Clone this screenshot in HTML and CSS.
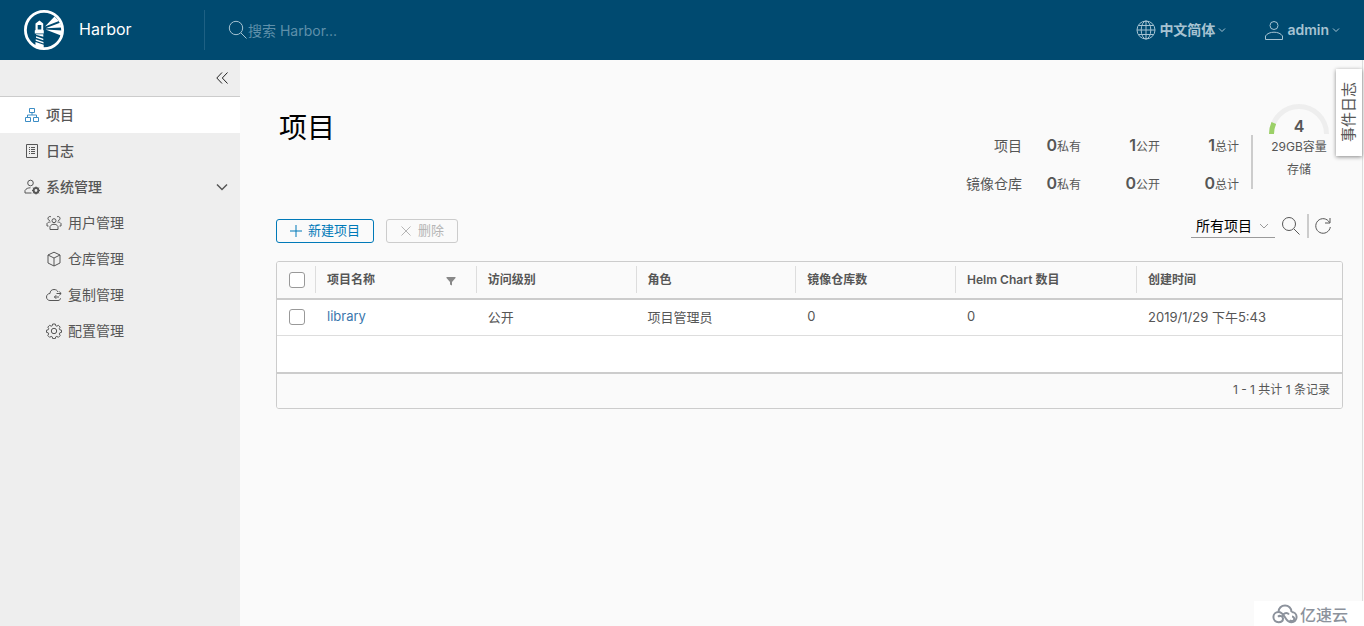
FILE: index.html
```html
<!DOCTYPE html>
<html lang="zh-CN">
<head>
<meta charset="utf-8">
<meta name="viewport" content="width=device-width, initial-scale=1">
<title>Harbor</title>
<link rel="stylesheet" href="styles.css">
</head>
<body>
<div class="app">
  <header class="topbar">
    <a class="brand" href="#">
      <svg class="brand-logo" viewBox="0 0 40 40" aria-hidden="true">
        <circle cx="20" cy="20" r="18.6" fill="none" stroke="#fff" stroke-width="2.8"/>
        <path fill="#fff" fill-rule="evenodd" d="M15.500 10.500 11.500 13.500V20l-.7.500v3h9v-3L19.200 20v-6.500zM13.700 15h3.600v4.500h-3.600z"/>
        <path fill="#fff" d="M12 24.300h7.300v2.500L12 24.800zM12 26.200l7.300 2.500v1.500L12 27.700zM11.700 29.200l7.800 2.700v1.500l-7.800-2.700zM11.500 32l8.200 2.800V38.500h-3.700l-4.700-1.500z"/>
        <path fill="#fff" d="M21 16.500 30.500 6.500l4.500 4.500zM21.500 18.200l14.500-5.500L37.500 17.500zM21.500 19.500l16.500 1-1 5z"/>
      </svg>
      <span class="brand-name">Harbor</span>
    </a>
    <form class="search" role="search">
      <svg class="search-icon" viewBox="0 0 20 20" aria-hidden="true"><circle cx="8" cy="8" r="6.700"/><path d="M13 13l5.500 5.500"/></svg>
      <input class="search-input" type="search" placeholder="搜索 Harbor..." aria-label="搜索 Harbor">
    </form>
    <div class="topbar-actions">
      <button class="top-button" type="button">
        <svg class="globe" viewBox="0 0 20 20" aria-hidden="true"><circle cx="10" cy="10" r="9"/><ellipse cx="10" cy="10" rx="4.800" ry="9"/><path d="M10 1v18M1 10h18M2.500 5.500h15M2.500 14.500h15"/></svg>
        <span>中文简体</span>
        <svg class="caret" viewBox="0 0 8 8" aria-hidden="true"><path d="M1 2.500l3 3 3-3"/></svg>
      </button>
      <button class="top-button" type="button">
        <svg class="person" viewBox="0 0 20 20" aria-hidden="true"><circle cx="10" cy="5.500" r="4"/><path d="M1.500 19.500v-3.500c1.500-2.500 5-3.800 8.500-3.800s7 1.300 8.500 3.800v3.500z"/></svg>
        <span>admin</span>
        <svg class="caret" viewBox="0 0 8 8" aria-hidden="true"><path d="M1 2.500l3 3 3-3"/></svg>
      </button>
    </div>
  </header>
  <div class="body">
    <nav class="sidebar">
      <div class="collapse-row">
        <button class="collapse" type="button" aria-label="收起">
          <svg viewBox="0 0 12 12" aria-hidden="true"><path d="M6 .500.800 6 6 11.500M11.500.500 6.300 6l5.200 5.500"/></svg>
        </button>
      </div>
      <a class="nav-item active" href="#">
        <svg viewBox="0 0 16 16" aria-hidden="true"><path d="M5.500 1.500h5v4h-5zM1.500 10.500h5v4h-5zM9.500 10.500h5v4h-5zM8 5.500V8M3.500 10.500V8h9v2.500"/></svg>
        <span>项目</span>
      </a>
      <a class="nav-item" href="#">
        <svg viewBox="0 0 16 16" aria-hidden="true"><path d="M2.500 1.500h11v13h-11zM5 4.500h1M7 4.500h4M5 6.500h1M7 6.500h4M5 8.500h1M7 8.500h4M5 10.500h1M7 10.500h4"/></svg>
        <span>日志</span>
      </a>
      <a class="nav-item" href="#">
        <svg viewBox="0 0 16 16" aria-hidden="true"><circle cx="6.500" cy="4" r="2.800"/><path d="M7.500 14H1v-2.500c1.200-2 3-2.700 5.500-2.700"/><circle cx="12" cy="11.500" r="2.400" stroke-width="2"/><path d="M12 7.500V9M12 14v1.500M8 11.500h1.500M14.500 11.500H16M9.200 8.700l1 1M13.800 13.300l1 1M14.800 8.700l-1 1M10.200 13.300l-1 1"/></svg>
        <span>系统管理</span>
        <svg class="nav-chevron" viewBox="0 0 12 12" aria-hidden="true"><path d="M1 3.500 6 8.500l5-5"/></svg>
      </a>
      <a class="nav-item sub" href="#">
        <svg viewBox="0 0 16 16" aria-hidden="true"><circle cx="8" cy="5.700" r="2"/><path d="M4 14.500v-3C5 9.800 6.300 9.300 8 9.300s3 .500 4 2.200v3zM5 1.800a2 2 0 1 0-1 3.700M11 1.800a2 2 0 1 1 1 3.700M1 11V8.500C1.800 7.400 2.900 7 4.500 7M15 11V8.500c-.8-1.100-1.900-1.500-3.500-1.500M1 11h1.500M15 11h-1.500"/></svg>
        <span>用户管理</span>
      </a>
      <a class="nav-item sub" href="#">
        <svg viewBox="0 0 16 16" aria-hidden="true"><path d="M8 1.200 14 4v8l-6 3-6-3V4zM2 4l6 3 6-3M8 7v8"/></svg>
        <span>仓库管理</span>
      </a>
      <a class="nav-item sub" href="#">
        <svg viewBox="0 0 16 16" aria-hidden="true"><path d="M12 5C11.500 3.500 10 2.500 8 2.500c-2.500 0-4 1.700-4 4C2 6.500.500 8 .500 10s1.500 3.500 3.500 3.500h8c1.500 0 2.500-1 2.500-2.200M10.500 6.500H15M13.300 4.700 15.200 6.500l-1.900 1.800M13 10H8.500M10.200 8.200 8.400 10l1.800 1.800"/></svg>
        <span>复制管理</span>
      </a>
      <a class="nav-item sub" href="#">
        <svg viewBox="0 0 16 16" aria-hidden="true"><circle cx="8" cy="8" r="2.700"/><path d="M6.700 1h2.600l.4 1.700 1.100.500 1.600-.9 1.800 1.800-.9 1.600.5 1.100 1.700.4v2.200l-1.700.4-.5 1.100.9 1.600-1.800 1.800-1.600-.9-1.100.5-.4 1.700H6.700l-.4-1.700-1.100-.5-1.600.9-1.800-1.800.9-1.600-.5-1.100-1.700-.4V7.200l1.700-.4.5-1.100-.9-1.600 1.800-1.800 1.600.9 1.100-.5z"/></svg>
        <span>配置管理</span>
      </a>
    </nav>
    <main class="content">
      <div class="page-head">
        <h1>项目</h1>
        <div class="summary">
          <div class="stats">
            <span class="stat-label">项目</span>
            <span class="stat"><b>0</b>私有</span><span class="stat"><b>1</b>公开</span><span class="stat"><b>1</b>总计</span>
            <span class="stat-label">镜像仓库</span>
            <span class="stat"><b>0</b>私有</span><span class="stat"><b>0</b>公开</span><span class="stat"><b>0</b>总计</span>
          </div>
          <div class="storage">
            <div class="gauge">
              <svg viewBox="0 0 60 31" aria-hidden="true"><path d="M2.500 30a27.500 27.500 0 0 1 55 0" stroke="#eee"/><path d="M2.500 30a27.500 27.500 0 0 1 2.300-11" stroke="#9bd067"/></svg>
              <strong>4</strong>
            </div>
            <span>29GB容量</span>
            <span>存储</span>
          </div>
        </div>
      </div>
      <div class="toolbar">
        <button class="btn primary" type="button"><svg viewBox="0 0 12 12" aria-hidden="true"><path d="M6 0v12M0 6h12"/></svg><span>新建项目</span></button>
        <button class="btn" type="button" disabled><svg viewBox="0 0 12 12" aria-hidden="true"><path d="M1.500 1.500l9 9M10.500 1.500l-9 9"/></svg><span>删除</span></button>
        <div class="filters">
          <div class="select-wrap">
            <select class="select" aria-label="项目筛选"><option>所有项目</option></select>
            <svg viewBox="0 0 10 10" aria-hidden="true"><path d="M1 3l4 4 4-4"/></svg>
          </div>
          <button class="icon-button" type="button" aria-label="搜索"><svg viewBox="0 0 20 20" aria-hidden="true"><circle cx="8" cy="8" r="6.500"/><path d="M13 13l5.500 5.500"/></svg></button>
          <button class="icon-button refresh" type="button" aria-label="刷新"><svg viewBox="0 0 20 20" aria-hidden="true"><path d="M16.500 6.500A7.300 7.300 0 1 0 17.300 11M17 2v5h-5"/></svg></button>
        </div>
      </div>
      <div class="datagrid">
        <table>
          <colgroup><col class="c-check"><col class="c-name"><col class="c-mid"><col class="c-mid"><col class="c-mid"><col class="c-chart"><col></colgroup>
          <thead>
            <tr>
              <th><input type="checkbox" aria-label="全选"></th>
              <th><div class="head-cell">项目名称<button class="filter" type="button" aria-label="筛选"><svg viewBox="0 0 10 10" aria-hidden="true"><path d="M.500 1h9v1L6 6v3.500L4 8.500V6L.500 2z"/></svg></button></div></th>
              <th><div class="head-cell">访问级别</div></th>
              <th><div class="head-cell">角色</div></th>
              <th><div class="head-cell">镜像仓库数</div></th>
              <th><div class="head-cell">Helm Chart 数目</div></th>
              <th><div class="head-cell">创建时间</div></th>
            </tr>
          </thead>
          <tbody>
            <tr>
              <td><input type="checkbox" aria-label="选择 library"></td>
              <td><a href="#">library</a></td>
              <td>公开</td>
              <td>项目管理员</td>
              <td>0</td>
              <td>0</td>
              <td>2019/1/29 下午5:43</td>
            </tr>
          </tbody>
        </table>
        <div class="grid-foot">1 - 1 共计 1 条记录</div>
      </div>
      <button class="event-tab" type="button"><span>事件日志</span></button>
      <div class="watermark">
        <svg viewBox="0 0 26 20" aria-hidden="true"><path d="M6.500 8C6.500 4 9.500 1.500 13 1.500S19.500 4 19.500 8M17 10.500c-1.500-2-4-2-5.500 0l-1.200 1.700M19.500 8a5 5 0 0 1 0 10.200c-2.500 0-4-1.200-5.200-3l-1.800-2.700C10.500 9.500 9 8 6.500 8a5 5 0 0 0 0 10.200c3 0 4.500-1.700 4.500-3.700A3 3 0 0 0 6 12.700M20 12.500a2.300 2.300 0 1 1-2 3.500"/></svg>
        <span>亿速云</span>
      </div>
    </main>
  </div>
</div>
</body>
</html>
```
FILE: styles.css
```css
* { box-sizing: border-box; }

body {
  margin: 0;
  font-family: Inter, "Noto Sans CJK SC", sans-serif;
  font-size: 14px;
  color: #565656;
  background: #fafafa;
}

button, input, select { font: inherit; color: inherit; }
button { padding: 0; border: 0; background: none; cursor: pointer; }
a { color: inherit; text-decoration: none; }
svg { display: block; flex: none; fill: none; stroke: currentColor; }

.app { display: flex; flex-direction: column; min-height: 100vh; }

/* Top bar */
.topbar {
  display: flex;
  align-items: center;
  height: 60px;
  padding: 0 24px;
  background: #004a70;
  color: #a6c3d2;
}
.brand {
  display: flex;
  align-items: center;
  gap: 15px;
  width: 180px;
  color: #fff;
}
.brand-logo { width: 40px; height: 40px; stroke: none; }
.brand-name { padding-bottom: 2px; font-size: 16px; }
.search {
  display: flex;
  flex: 1;
  align-items: center;
  height: 40px;
  padding-left: 23px;
  border-left: 1px solid #1e6083;
}
.search-icon { width: 20px; height: 20px; stroke: #a6c3d2; }
.search-input {
  width: 240px;
  padding: 0;
  border: 0;
  outline: 0;
  background: none;
}
.search-input::placeholder { color: #5f90aa; opacity: 1; }
.topbar-actions { display: flex; gap: 38px; }
.top-button {
  display: flex;
  align-items: center;
  gap: 3px;
  font-weight: 600;
}
.top-button span { padding-bottom: 2px; }
.globe, .person { width: 20px; height: 20px; }
.caret { width: 8px; height: 8px; }

.body { display: flex; flex: 1; }

/* Sidebar */
.sidebar { flex: none; width: 240px; background: #eee; }
.collapse-row {
  display: flex;
  justify-content: flex-end;
  align-items: center;
  height: 37px;
  padding-right: 12px;
  border-bottom: 1px solid #ccc;
}
.collapse svg { width: 12px; height: 12px; stroke: #222; }
.nav-item {
  display: flex;
  align-items: center;
  gap: 6px;
  height: 36px;
  padding: 0 12px 0 24px;
  font-weight: 500;
}
.nav-item span { padding-bottom: 2px; }
.nav-item svg { width: 16px; height: 16px; }
.nav-item .nav-chevron { width: 12px; height: 12px; margin-left: auto; stroke-width: 1.5; }
.nav-item.active { background: #fff; }
.nav-item.active svg { stroke: #3c8dc5; }
.nav-item.sub { padding-left: 46px; font-weight: 400; }

/* Content */
.content {
  position: relative;
  flex: 1;
  min-width: 0;
  margin-right: 1px;
  padding: 44px 19px 24px 36px;
  border-right: 1px solid #ddd;
}
.page-head { display: flex; justify-content: space-between; }
h1 {
  margin: 4px 0 0 3px;
  font-size: 28px;
  line-height: 40px;
  font-weight: 400;
  color: #000;
}
.summary { display: flex; align-items: flex-start; padding-right: 14px; }
.stats {
  display: grid;
  grid-template-columns: 60px 59px 79px 79px;
  grid-auto-rows: 38px;
  align-items: baseline;
  justify-items: end;
  height: 54px;
  margin-top: 31px;
  padding-right: 12px;
  border-right: 2px solid #ccc;
  line-height: 20px;
}
.stat { font-size: 12px; }
.stat b { font-size: 16px; font-weight: 600; }
.storage {
  display: flex;
  flex-direction: column;
  align-items: center;
  width: 76px;
  padding-left: 16px;
  font-size: 12px;
  line-height: 23px;
}
.gauge { display: grid; justify-items: center; width: 60px; height: 31px; }
.gauge svg, .gauge strong { grid-area: 1 / 1; }
.gauge svg { width: 60px; height: 31px; stroke-width: 5; }
.gauge strong { align-self: end; font-size: 16px; font-weight: 600; line-height: 18px; }

.toolbar {
  display: flex;
  align-items: flex-end;
  gap: 12px;
  margin-top: 30px;
}
.btn {
  display: flex;
  align-items: center;
  justify-content: center;
  gap: 6px;
  height: 24px;
  padding: 0 13px;
  border: 1px solid #ccc;
  border-radius: 3px;
  font-size: 13px;
  line-height: 20px;
  color: #b5b5b5;
}
.btn span { padding-bottom: 2px; }
.btn svg { width: 12px; height: 12px; }
.btn.primary { border-color: #0079b8; color: #0079b8; }
.filters {
  display: flex;
  align-items: center;
  gap: 6px;
  margin: -5px 10px 5px auto;
}
.select-wrap { display: grid; align-items: center; width: 84px; border-bottom: 1px solid #9a9a9a; }
.select, .select-wrap svg { grid-area: 1 / 1; }
.select {
  width: 100%;
  height: 23px;
  padding: 0 0 0 5px;
  border: 0;
  background: none;
  appearance: none;
  color: #000;
}
.select-wrap svg { width: 10px; height: 10px; margin-right: 6px; justify-self: end; pointer-events: none; stroke: #9a9a9a; }
.icon-button { display: flex; align-items: center; height: 24px; }
.icon-button svg { width: 20px; height: 20px; }
.refresh { padding-left: 4px; border-left: 2px solid #ccc; }

/* Project grid */
.datagrid {
  margin-top: 18px;
  border: 1px solid #ccc;
  border-radius: 3px;
  background: #fff;
  font-size: 13px;
  overflow: hidden;
}
table { width: 100%; table-layout: fixed; border-collapse: collapse; }
.c-check { width: 38px; }
.c-name { width: 15.1%; }
.c-mid { width: 15%; }
.c-chart { width: 17%; }
th {
  height: 37px;
  padding: 0;
  border-bottom: 2px solid #ccc;
  background: #fafafa;
  font-size: 12px;
  font-weight: 600;
  text-align: left;
  vertical-align: top;
}
.head-cell {
  display: flex;
  align-items: center;
  justify-content: space-between;
  height: 27px;
  margin-top: 4px;
  padding: 0 20px 2px 11px;
  border-left: 1px solid #ddd;
}
.filter svg { width: 10px; height: 10px; fill: #888; stroke: none; margin-top: 4px; }
td { height: 36px; padding: 0 12px 2px; border-bottom: 1px solid #ddd; }
td a { color: #3a76ac; }
th:first-child, td:first-child { padding: 0 0 0 12px; vertical-align: middle; }
input[type="checkbox"] {
  display: block;
  appearance: none;
  width: 16px;
  height: 16px;
  margin: 0;
  border: 1px solid #999;
  border-radius: 3px;
  background: #fff;
}
.grid-foot {
  margin-top: 36px;
  padding: 0 12px 2px;
  border-top: 2px solid #ccc;
  background: #fafafa;
  font-size: 12px;
  line-height: 32px;
  text-align: right;
}

/* Overlays */
.event-tab {
  position: absolute;
  top: 9px;
  right: 0;
  width: 26px;
  height: 87px;
  background: #fff;
  box-shadow: 0 1px 4px #888;
}
.event-tab span {
  display: block;
  margin: 0 auto;
  writing-mode: vertical-rl;
  text-orientation: sideways;
  transform: rotate(180deg);
  line-height: 26px;
  font-size: 15px;
}
.watermark {
  position: absolute;
  right: -2px;
  bottom: 0;
  display: flex;
  align-items: center;
  gap: 2px;
  height: 25px;
  padding: 0 16px 0 18px;
  background: #fff;
  color: #8c929c;
  font-size: 16px;
  font-weight: 500;
}
.watermark svg { width: 26px; height: 20px; stroke-width: 2; }
```
